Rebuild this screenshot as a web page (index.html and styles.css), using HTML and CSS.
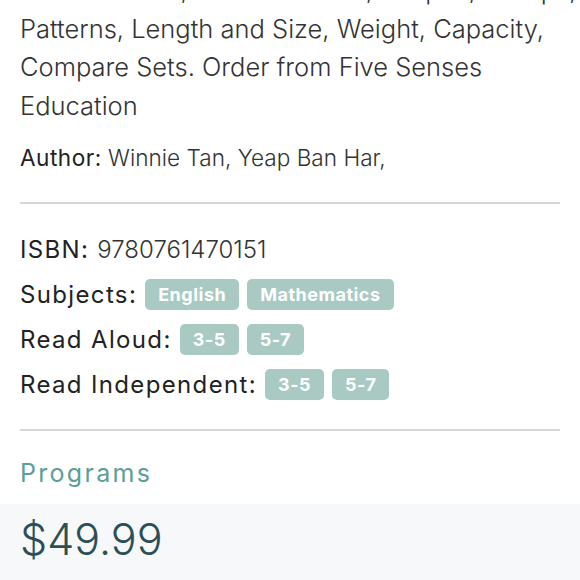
FILE: index.html
```html
<!DOCTYPE html>
<html>
<head>
<meta charset="utf-8">
<link rel="stylesheet" href="styles.css">
</head>
<body>
<div class="content">
  <p class="desc">Numbers to 5, Numbers to 10, Shapes, Groups,<br>Patterns, Length and Size, Weight, Capacity,<br>Compare Sets. Order from Five Senses<br>Education</p>
  <p class="author"><span class="label">Author:</span> Winnie Tan, Yeap Ban Har,</p>
  <hr class="rule">
  <div class="meta">
    <div class="row"><span class="label">ISBN:</span> <span class="value">9780761470151</span></div>
    <div class="row"><span class="label">Subjects:</span><span class="badge">English</span><span class="badge">Mathematics</span></div>
    <div class="row"><span class="label">Read Aloud:</span><span class="badge">3-5</span><span class="badge">5-7</span></div>
    <div class="row"><span class="label">Read Independent:</span><span class="badge">3-5</span><span class="badge">5-7</span></div>
  </div>
  <hr class="rule">
  <div class="programs">Programs</div>
</div>
<div class="price-band">
  <div class="price">$49.99</div>
</div>
</body>
</html>
```
FILE: styles.css
```css
html, body {
  margin: 0;
  padding: 0;
  background: #ffffff;
}
body {
  font-family: Inter, "Open Sans", "Liberation Sans", sans-serif;
  color: #333333;
  overflow: hidden;
  height: 580px;
  display: flex;
  flex-direction: column;
}
.content {
  padding: 0 20px;
}
.desc {
  margin: -29px 0 0 0;
  font-size: 25.5px;
  font-weight: 300;
  line-height: 38.5px;
  color: #333;
  white-space: nowrap;
}
.author {
  margin: 14px 0 0 0;
  font-size: 22.6px;
  font-weight: 300;
  line-height: 38px;
}
.author .label {
  letter-spacing: 0.5px;
}
.label {
  font-weight: 400;
  color: #222;
}
.rule {
  border: 0;
  border-top: 2px solid #d6d6d6;
  margin: 25px 0 0 0;
  height: 0;
}
.meta {
  display: flex;
  flex-direction: column;
  margin-top: 23px;
}
.row {
  display: flex;
  align-items: center;
  height: 45px;
  font-size: 24px;
  font-weight: 300;
}
.row .label {
  letter-spacing: 1.35px;
}
.row .value {
  margin-left: 8px;
}
.badge {
  display: inline-flex;
  align-items: center;
  justify-content: center;
  height: 31px;
  padding: 0 13px;
  margin-left: 8px;
  border-radius: 5px;
  background: #a8cac2;
  color: #ffffff;
  font-weight: 700;
  font-size: 18px;
  letter-spacing: 0.5px;
}
.row .label + .badge {
  margin-left: 8px;
}
.meta + .rule {
  margin-top: 22px;
}
.programs {
  margin-top: 24px;
  font-size: 25px;
  font-weight: 400;
  letter-spacing: 2.3px;
  line-height: 36px;
  color: #5c9e99;
  padding-bottom: 13px;
}
.price-band {
  flex: 1;
  background: #f6f8fa;
  padding: 9px 20px 0;
}
.price {
  font-size: 43px;
  font-weight: 300;
  color: #2c4f55;
  line-height: 52px;
}
```
